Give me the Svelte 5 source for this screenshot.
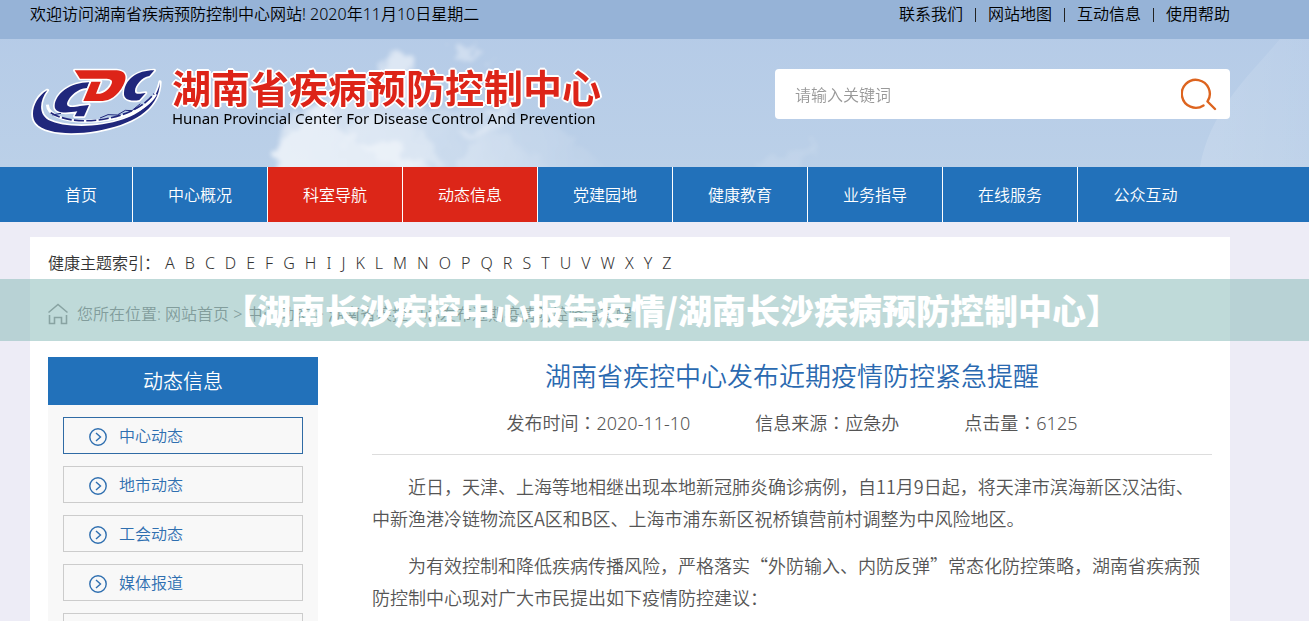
<script>
  const topLinks = ['联系我们', '网站地图', '互动信息', '使用帮助'];

  const menu = [
    { label: '首页' },
    { label: '中心概况' },
    { label: '科室导航', active: true },
    { label: '动态信息', active: true },
    { label: '党建园地' },
    { label: '健康教育' },
    { label: '业务指导' },
    { label: '在线服务' },
    { label: '公众互动' },
  ];

  const letters = 'ABCDEFGHIJKLMNOPQRSTUVWXYZ'.split('');

  const sections = ['中心动态', '地市动态', '工会动态', '媒体报道', '通知公告'];

  const title = '湖南省疾控中心发布近期疫情防控紧急提醒';

  const meta = ['发布时间：2020-11-10', '信息来源：应急办', '点击量：6125'];

  const paragraphs = [
    '近日，天津、上海等地相继出现本地新冠肺炎确诊病例，自11月9日起，将天津市滨海新区汉沽街、中新渔港冷链物流区A区和B区、上海市浦东新区祝桥镇营前村调整为中风险地区。',
    '为有效控制和降低疾病传播风险，严格落实“外防输入、内防反弹”常态化防控策略，湖南省疾病预防控制中心现对广大市民提出如下疫情防控建议：',
  ];

  let keyword = '';
</script>

<header class="header">
  <svg class="sky" width="1400" height="167" viewBox="0 0 1400 167" aria-hidden="true">
    <defs>
      <filter id="cloud" x="-20%" y="-20%" width="140%" height="140%">
        <feTurbulence type="fractalNoise" baseFrequency="0.06" numOctaves="4" seed="8" result="noise" />
        <feDisplacementMap in="SourceGraphic" in2="noise" scale="30" xChannelSelector="R" yChannelSelector="G" />
        <feGaussianBlur stdDeviation="2" />
      </filter>
      <linearGradient id="haze" x1="0" y1="0" x2="1" y2="0">
        <stop offset="0" stop-color="#fff" stop-opacity="0.75" />
        <stop offset="0.5" stop-color="#fff" stop-opacity="0.5" />
        <stop offset="1" stop-color="#fff" stop-opacity="0" />
      </linearGradient>
      <linearGradient id="ray" x1="0" y1="0" x2="1" y2="0">
        <stop offset="0" stop-color="#fff" stop-opacity="0.14" />
        <stop offset="1" stop-color="#fff" stop-opacity="0" />
      </linearGradient>
    </defs>
    <g filter="url(#cloud)" fill="#fff">
      <path d="M274 190 C270 150 282 130 305 122 C325 108 340 76 365 82 C380 64 392 48 408 54 C420 65 405 90 425 105 C450 112 470 98 490 105 C475 125 500 135 530 150 L570 190 Z" fill="url(#haze)" opacity="0.6" />
      <path d="M276 190 C270 155 278 112 312 110 C330 100 350 125 352 150 C380 132 400 140 410 155 L460 190 Z" opacity="0.4" />
      <path d="M345 140 C350 120 375 110 400 122 C420 130 430 150 450 160 L400 170 Z" opacity="0.25" />
      <path d="M382 78 C385 62 398 48 410 54 C414 64 402 76 392 84 Z" opacity="0.3" />
      <path d="M450 56 C460 46 472 47 480 52 C472 58 460 60 450 56 Z" opacity="0.35" />
      <path d="M484 60 L496 57 L490 64 Z" opacity="0.3" />
      <path d="M462 135 C480 115 492 112 510 106 C505 122 490 130 470 142 Z" opacity="0.3" />
      <path d="M490 110 C550 110 590 145 630 190 L450 190 Z" fill="url(#haze)" opacity="0.3" />
      <path d="M760 165 C790 160 805 145 820 135 C820 150 810 160 790 180 L760 180 Z" opacity="0.1" />
    </g>
    <path d="M1280 39 C1250 75 1210 110 1200 167 L1400 167 V39 Z" fill="url(#ray)" />
  </svg>

  <div class="topbar">
    <div class="container topbar-row">
      <span>欢迎访问湖南省疾病预防控制中心网站! 2020年11月10日星期二</span>
      <nav class="top-links" aria-label="快捷链接">
        {#each topLinks as link}
          <a href="#top">{link}</a>
        {/each}
      </nav>
    </div>
  </div>

  <div class="container brand-row">
    <a class="brand" href="#home">
      <svg class="emblem" width="132" height="70" viewBox="30 38 396 210" aria-hidden="true">
        <g stroke="#fff" stroke-width="10" stroke-linejoin="round" paint-order="stroke">
          <path fill="#20277c" d="M82 108 C42 130 28 182 48 207 C75 240 160 242 230 230 C330 212 418 170 420 83 C412 130 375 172 310 195 C230 222 130 220 85 197 C55 178 58 140 82 108 Z" />
          <path fill="#20277c" d="M208 84 L202 101 C170 102 143 132 141 149 C142 160 158 160 180 155 L207 152 L192 186 L164 186 L172 171 C135 177 104 177 104 155 C106 118 150 84 208 84 Z" />
          <path fill="#20277c" d="M403 48 L388 65 C365 68 345 95 345 109 C344 120 355 120 377 116 L358 137 C330 142 310 135 312 115 C315 75 350 48 403 48 Z" />
          <path fill="#dd2418" d="M164 48 L290 48 C325 50 321 78 304 103 C282 134 262 140 240 140 L190 140 L214 82 L242 82 L228 118 L240 118 C262 114 276 92 276 82 C276 74 265 73 250 73 L180 73 Z" />
        </g>
        <path d="M82 151 C84 180 125 200 190 201 C280 202 375 175 407 119" fill="none" stroke="#fff" stroke-width="9" />
        <path d="M92 175 C130 198 180 203 235 197 C310 187 370 160 402 118" fill="none" stroke="#20277c" stroke-width="5" stroke-dasharray="30 7" />
        <path d="M97 182 L123 177 M240 191 L264 181 L292 182 L316 168 L336 169 L361 148" fill="none" stroke="#20277c" stroke-width="3" />
      </svg>
      <span class="brand-text">
        <strong>湖南省疾病预防控制中心</strong>
        <span class="brand-en" lang="en">Hunan Provincial Center For Disease Control And Prevention</span>
      </span>
    </a>

    <form class="search" on:submit|preventDefault>
      <input type="text" aria-label="请输入关键词" placeholder="请输入关键词" bind:value={keyword} />
      <button type="submit" aria-label="搜索">
        <svg width="36" height="34" viewBox="0 0 36 34" aria-hidden="true">
          <path d="M22.5 28.5 A14 14 0 1 1 26.5 24.5 L34 32" fill="none" stroke="#dd641f" stroke-width="2.4" stroke-linecap="round" stroke-linejoin="round" />
        </svg>
      </button>
    </form>
  </div>
</header>

<nav class="main-nav" aria-label="主导航">
  <ul class="container">
    {#each menu as item}
      <li><a href="#menu" class:active={item.active}>{item.label}</a></li>
    {/each}
  </ul>
</nav>

<div class="promo">【湖南长沙疾控中心报告疫情/湖南长沙疾病预防控制中心】</div>

<main class="container page">
  <div class="index">
    <span>健康主题索引：</span>
    {#each letters as letter}
      <a href="#index">{letter}</a>
    {/each}
  </div>

  <div class="crumbs">
    <svg width="20" height="22" viewBox="0 0 20 22" fill="none" stroke="#777" stroke-width="1.6" aria-hidden="true">
      <path d="M0.5 9.5 L10 1.5 L19.5 9.5 M1.5 12 V20.5 H6.5 V14.5 H13.5 V20.5 H18.5 V12" />
    </svg>
    <span>您所在位置: <a href="#home">网站首页</a> &gt; <a href="#news">中心动态</a> &gt; {title}</span>
  </div>

  <div class="columns">
    <aside class="sidebar">
      <h2>动态信息</h2>
      <ul>
        {#each sections as section, i}
          <li>
            <a href="#section" class:current={i === 0}>
              <svg width="18" height="18" viewBox="0 0 18 18" fill="none" stroke="#2f6fb0" stroke-width="1.4" aria-hidden="true">
                <circle cx="9" cy="9" r="8.2" />
                <path d="M7 5 L11.5 9 L7 13" />
              </svg>
              {section}
            </a>
          </li>
        {/each}
      </ul>
    </aside>

    <article class="article">
      <h1>{title}</h1>
      <div class="meta">
        {#each meta as entry}
          <span>{entry}</span>
        {/each}
      </div>
      {#each paragraphs as text}
        <p>{text}</p>
      {/each}
    </article>
  </div>
</main>

<style>
  :global(body) {
    background: #edecf6;
    color: #333;
    font-family: 'Noto Sans', 'Noto Sans CJK SC', sans-serif;
    font-size: 16px;
    font-weight: 350;
    line-height: 24px;
  }

  a {
    color: inherit;
    text-decoration: none;
  }

  ul {
    list-style: none;
    margin: 0;
    padding: 0;
  }

  .container {
    box-sizing: border-box;
    max-width: 1200px;
    margin: 0 30px;
  }

  /* header */
  .header {
    position: relative;
    overflow: hidden;
    background: linear-gradient(#b4cae7, #bbd0e8);
  }

  .sky {
    position: absolute;
    top: 0;
    left: 0;
  }

  .topbar {
    position: relative;
    background: #96b3d7;
    color: #000;
  }

  .topbar-row {
    display: flex;
    justify-content: space-between;
    padding: 2px 0 13px;
  }

  .top-links {
    display: flex;
    align-items: center;
  }
  .top-links a + a::before {
    content: '';
    display: inline-block;
    width: 1px;
    height: 14px;
    margin: 0 12px;
    background: #222;
    vertical-align: -2px;
  }

  .brand-row {
    position: relative;
    display: flex;
    justify-content: space-between;
    align-items: flex-start;
    height: 128px;
  }

  .brand {
    display: flex;
    gap: 10px;
    padding-top: 28px;
    color: #000;
  }

  .brand-text {
    display: flex;
    flex-direction: column;
  }
  .brand-text strong {
    color: #dd2418;
    font-size: 39px;
    font-weight: 700;
    line-height: 42px;
    text-shadow: 2px 0 #fff, -2px 0 #fff, 0 2px #fff, 0 -2px #fff, 1px 1px #fff, -1px -1px #fff, 1px -1px #fff, -1px 1px #fff;
  }

  .brand-en {
    font-size: 15px;
    font-weight: 400;
    line-height: 18px;
  }

  .search {
    display: flex;
    width: 455px;
    height: 50px;
    margin-top: 30px;
    border-radius: 4px;
    background: #fff;
  }
  .search input {
    flex: 1;
    min-width: 0;
    padding: 2px 20px 0;
    border: 0;
    outline: 0;
    background: none;
    font: inherit;
  }
  .search input::placeholder {
    color: #999;
  }
  .search button {
    display: flex;
    align-items: center;
    padding: 0 13px;
    border: 0;
    background: none;
    cursor: pointer;
  }

  /* navigation */
  .main-nav {
    background: #2271ba;
  }
  .main-nav ul {
    display: flex;
  }
  .main-nav li {
    width: 135px;
  }
  .main-nav li:first-child {
    width: 103px;
  }
  .main-nav a {
    display: block;
    padding-top: 2px;
    border-right: 1px solid #fff;
    color: #fff;
    line-height: 53px;
    text-align: center;
  }
  .main-nav li:last-child a {
    border-right: 0;
  }
  .main-nav .active {
    background: #dc2618;
  }

  /* strip laid over the page */
  .promo {
    position: absolute;
    top: 279px;
    left: 0;
    right: 0;
    z-index: 1;
    overflow: hidden;
    padding-left: 34px;
    background: rgba(148, 193, 191, 0.6);
    color: #fff;
    font-family: 'Noto Sans CJK SC', sans-serif;
    font-size: 34px;
    font-weight: 900;
    line-height: 62px;
    text-align: center;
    white-space: nowrap;
  }

  /* content */
  .page {
    margin-top: 15px;
    padding: 14px 18px 30px;
    background: #fff;
  }

  .index {
    display: flex;
    flex-wrap: wrap;
    gap: 0 10px;
  }
  .index span {
    margin-right: -5px;
  }

  .crumbs {
    display: flex;
    align-items: center;
    gap: 9px;
    height: 48px;
    padding-top: 15px;
    color: #666;
  }

  .columns {
    display: flex;
    gap: 54px;
    margin-top: 19px;
  }

  .sidebar {
    flex: none;
    width: 270px;
    background: #f8f8f8;
  }
  .sidebar h2 {
    margin: 0;
    padding-top: 2px;
    background: #2271ba;
    color: #fff;
    font-size: 20px;
    font-weight: inherit;
    line-height: 46px;
    text-align: center;
  }
  .sidebar ul {
    display: grid;
    gap: 12px;
    padding: 12px 15px;
  }
  .sidebar a {
    display: flex;
    align-items: center;
    gap: 12px;
    padding: 2px 0 0 25px;
    border: 1px solid #ccc;
    color: #2f6fb0;
    line-height: 33px;
  }
  .sidebar .current {
    border-color: #2f6ba5;
  }

  .article {
    flex: 1;
    min-width: 0;
    color: #555;
    font-size: 18px;
  }
  .article h1 {
    margin: 0;
    color: #2a69b0;
    font-size: 26px;
    font-weight: inherit;
    line-height: 38px;
    text-align: center;
  }
  .article p {
    margin: 15px 0;
    padding-right: 8px;
    font-family: 'Noto Sans CJK SC', sans-serif;
    line-height: 32px;
    text-indent: 2em;
  }

  .meta {
    display: flex;
    justify-content: center;
    gap: 65px;
    padding: 12px 0 15px;
    border-bottom: 1px solid #ddd;
    font-family: 'Noto Sans', 'Noto Sans CJK TC', sans-serif;
    line-height: 32px;
  }
</style>
